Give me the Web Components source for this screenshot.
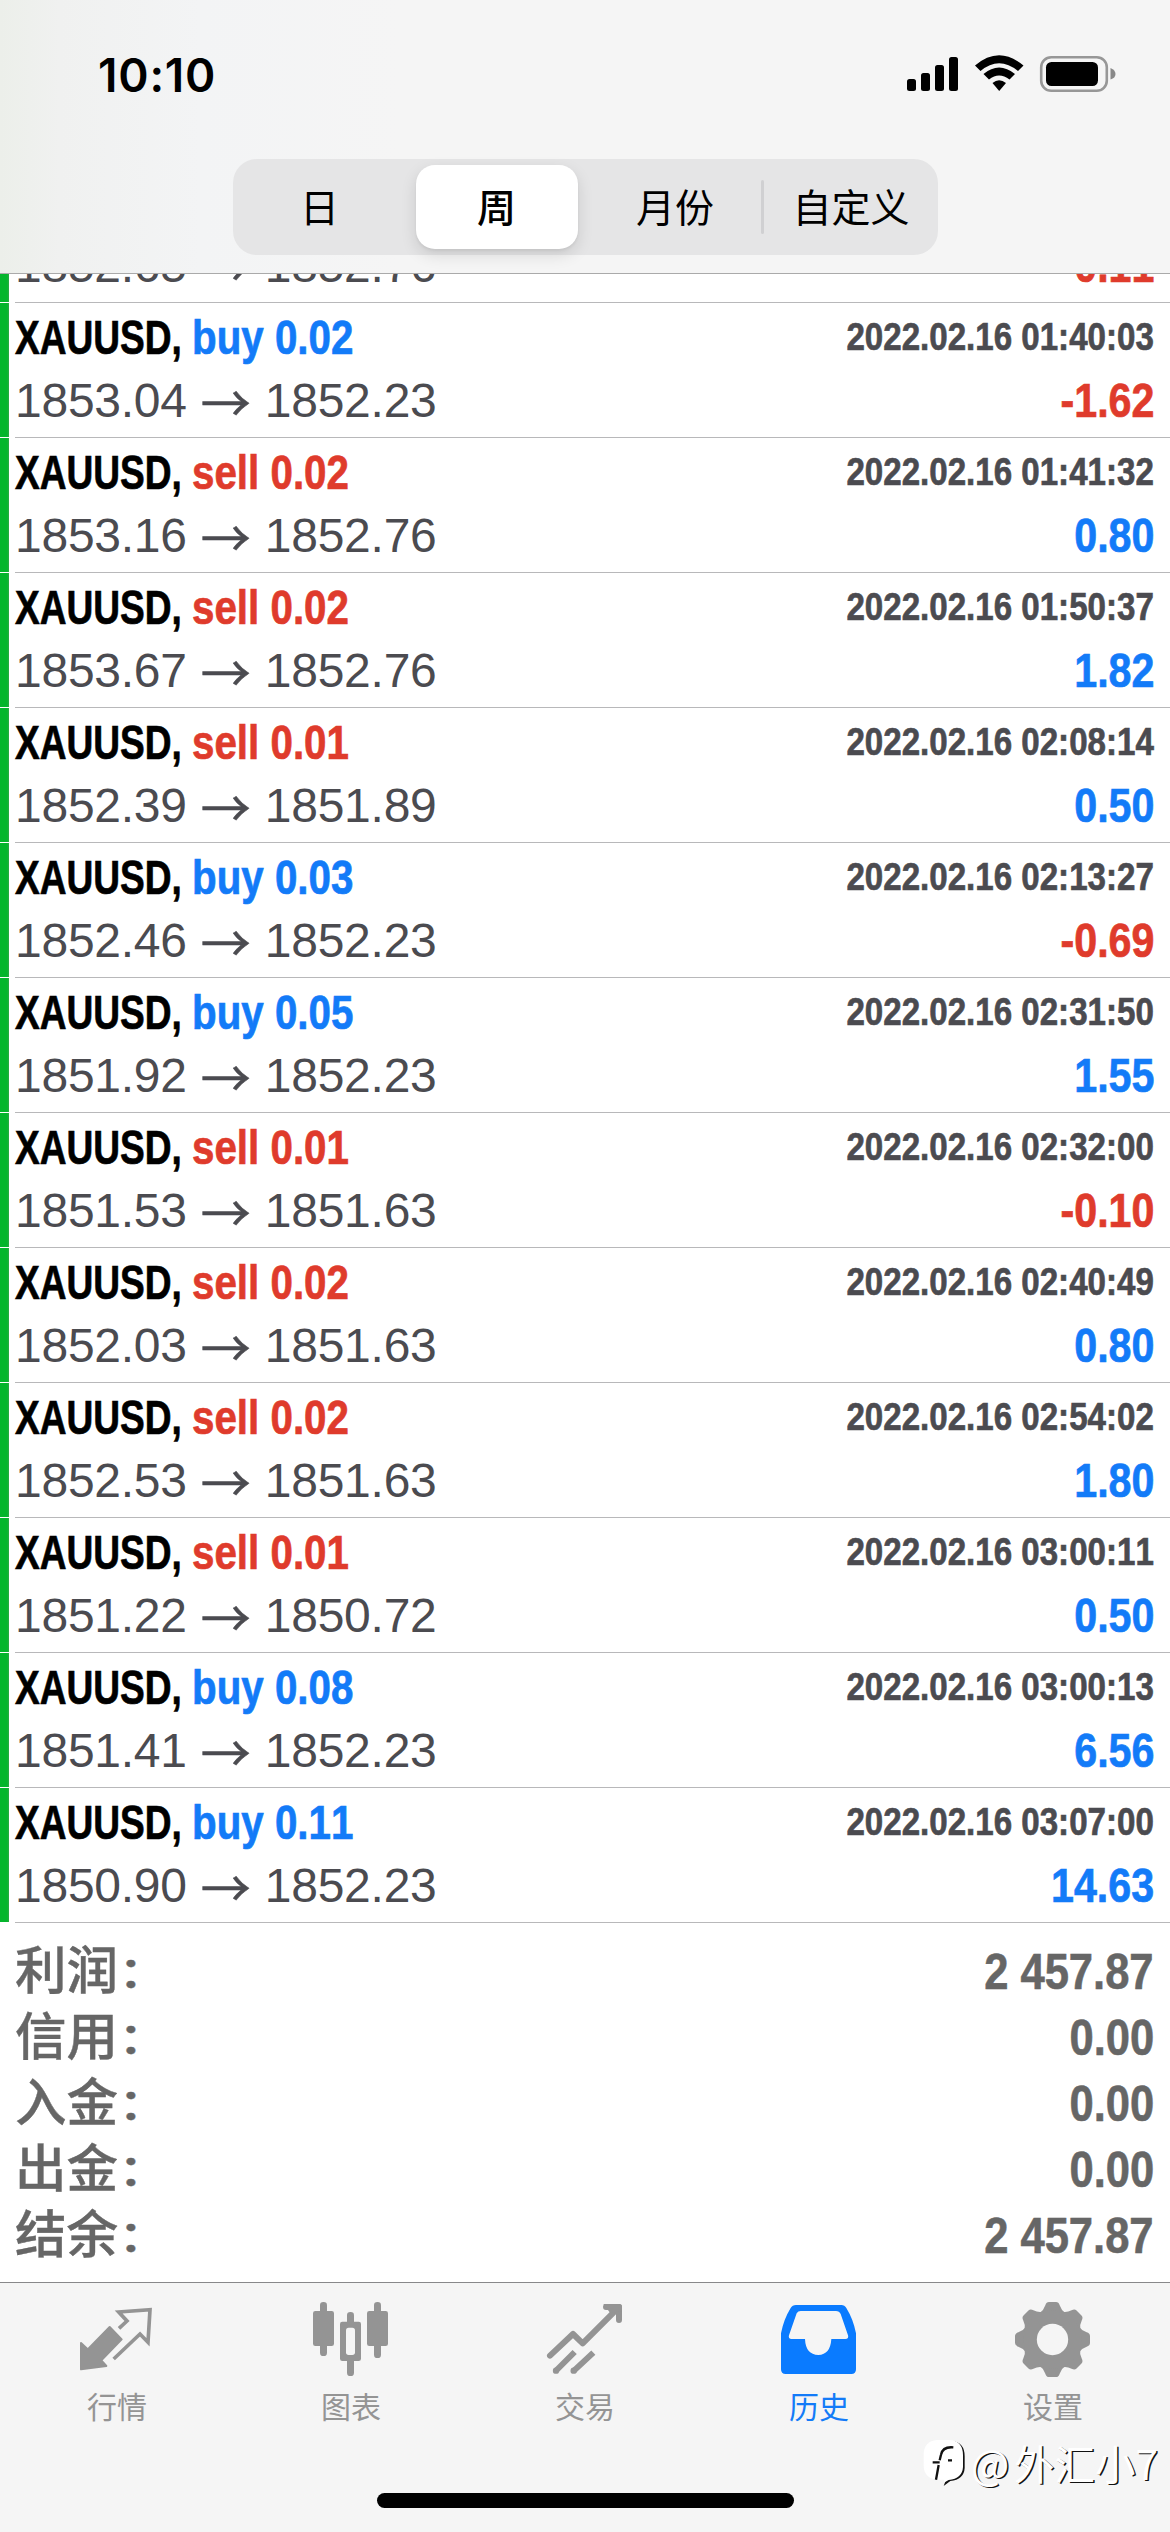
<!DOCTYPE html>
<html lang="zh-CN">
<head>
<meta charset="utf-8">
<title>历史</title>
<style>
html,body{margin:0;padding:0;background:#fff}
body{width:1170px;height:2532px;overflow:hidden;font-family:"Liberation Sans","Noto Sans CJK SC",sans-serif;font-kerning:none}
</style>
</head>
<body>
<history-app></history-app>
<script>
const define=(name,html,setup)=>customElements.define(name,class extends HTMLElement{
  constructor(){super();this.attachShadow({mode:'open'});}
  connectedCallback(){
    const t=document.createElement('template');
    t.innerHTML=typeof html==='function'?html(this):html;
    this.shadowRoot.replaceChildren(t.content.cloneNode(true));
    if(setup)setup(this);
  }
});

define('status-bar',`<style>
:host{display:flex;justify-content:space-between;height:159px;box-sizing:border-box;padding:48px 54px 0 98px}
.time{font:600 46px/54px Inter,sans-serif;letter-spacing:.8px;color:#000}
svg{display:block;width:212px;height:44px;margin-top:4px}
</style>
<span class="time">10:10</span>
<svg viewBox="904 52 212 44">
<rect x="907" y="79" width="9" height="12" rx="2.5"/><rect x="921" y="73" width="9" height="18" rx="2.5"/><rect x="935" y="65" width="9" height="26" rx="2.5"/><rect x="949" y="57" width="9" height="34" rx="2.5"/>
<path d="M975 65.5Q999 45 1023.5 65.5L1018 71Q999 55.500 980.500 71Z"/>
<path d="M983.500 74Q999 61 1015 74L1009.500 79.500Q999 71.500 989 79.500Z"/>
<path d="M992.500 83Q999 77.500 1006 83L999.200 91Z"/>
<rect x="1041.200" y="57.200" width="65.600" height="33.600" rx="10" fill="none" stroke="#979797" stroke-width="2.600"/>
<rect x="1046" y="62" width="52" height="24" rx="5.500"/>
<path d="M1110.500 68Q1115.500 70 1115.500 74T1110.500 79.500Z" fill="#888"/>
</svg>`);

define('seg-item',`<style>
:host{display:flex;align-items:center;justify-content:center;height:84px;box-sizing:border-box;padding-bottom:5px;border-radius:19px;font:400 39px/60px "Noto Sans CJK SC",sans-serif;color:#000}
:host([selected]){background:#fff;font-weight:500;box-shadow:0 6px 16px rgba(0,0,0,.12),0 2px 3px rgba(0,0,0,.05)}
</style><slot></slot>`);

define('seg-control',`<style>
:host{display:flex;align-items:center;width:705px;height:96px;box-sizing:border-box;padding:0 6px;background:#e5e5e6;border-radius:24px}
seg-item{flex:none}
seg-item:nth-of-type(1){width:162px;margin-right:15px}
seg-item:nth-of-type(2){width:162px;margin-right:12px}
seg-item:nth-of-type(3){width:171px}
seg-item:nth-of-type(4){width:159px;margin-left:8px}
i{width:3px;height:54px;background:#d0d0d2;border-radius:2px}
</style>
<seg-item>日</seg-item><seg-item selected>周</seg-item><seg-item>月份</seg-item><i></i><seg-item>自定义</seg-item>`);

define('top-bar',`<style>
:host{display:flex;flex-direction:column;align-items:center;height:274px;box-sizing:border-box;border-bottom:1px solid #aaa;background:linear-gradient(90deg,#ecefea 0,#f0f1f0 60px,#f3f4f5 200px,#f5f5f5 400px)}
status-bar{width:100%}
</style><status-bar></status-bar><seg-control></seg-control>`);

define('trade-row',el=>{
  const a=n=>el.getAttribute(n);
  const side=a('side'),p=a('profit');
  const heading=side?`<div class="sym"><span>XAUUSD,</span></div><span class="vol ${side}">${side} ${a('volume')}</span>`:'';
  return `<style>
:host{display:flex;height:135px;flex:none}
.bar{width:9px;height:134px;background:linear-gradient(90deg,#04b62c 7px,#2cab45);flex:none}
.body{flex:1;margin-left:6px;border-bottom:1px solid #b8b8ba;display:flex;justify-content:space-between;padding:3px 16px 5px 0}
.l,.r{display:flex;flex-direction:column}
.r{align-items:flex-end}
.name{display:flex;height:63px;font-weight:700;font-size:48px;line-height:63px;white-space:pre}
.name,.profit,.date{-webkit-text-stroke:.7px currentColor}
.sym{width:177px;color:#000}
span{white-space:pre}
.sym span,.vol{display:block;transform-origin:0 0}
.sym span{transform:scaleX(.772);width:0}
.vol{transform:scaleX(.84)}
.buy,.pos{color:#137bf8}.sell,.neg{color:#df3b2c}
.price{font-size:48px;line-height:63px;color:#4b4b50;display:flex;letter-spacing:-.25px}
.arrow{width:78px;text-align:center;font-family:"Noto Sans CJK SC",sans-serif;font-weight:400;font-size:50px;letter-spacing:0;-webkit-text-stroke:.5px currentColor}
.date{font-weight:700;font-size:39.500px;line-height:61px;color:#4b4b50;transform:scaleX(.838);transform-origin:100% 0;height:63px}
.profit{font-weight:700;font-size:48px;line-height:63px;transform:scaleX(.858);transform-origin:100% 0}
</style>
<div class="bar"></div>
<div class="body"><div class="l">
<div class="name">${heading}</div>
<div class="price"><span>${a('open')}</span><span class="arrow">→</span><span>${a('close')}</span></div>
</div><div class="r"><span class="date">${a('time')?'2022.02.16 '+a('time'):''}</span><span class="profit ${p[0]==='-'?'neg':'pos'}">${p}</span></div></div>`;
});

define('trade-list',`<style>
:host{display:flex;flex-direction:column;justify-content:flex-end;height:1649px;overflow:hidden}
</style>
<trade-row open="1852.65" close="1852.76" profit="-0.11"></trade-row>
<trade-row side="buy" volume="0.02" time="01:40:03" open="1853.04" close="1852.23" profit="-1.62"></trade-row>
<trade-row side="sell" volume="0.02" time="01:41:32" open="1853.16" close="1852.76" profit="0.80"></trade-row>
<trade-row side="sell" volume="0.02" time="01:50:37" open="1853.67" close="1852.76" profit="1.82"></trade-row>
<trade-row side="sell" volume="0.01" time="02:08:14" open="1852.39" close="1851.89" profit="0.50"></trade-row>
<trade-row side="buy" volume="0.03" time="02:13:27" open="1852.46" close="1852.23" profit="-0.69"></trade-row>
<trade-row side="buy" volume="0.05" time="02:31:50" open="1851.92" close="1852.23" profit="1.55"></trade-row>
<trade-row side="sell" volume="0.01" time="02:32:00" open="1851.53" close="1851.63" profit="-0.10"></trade-row>
<trade-row side="sell" volume="0.02" time="02:40:49" open="1852.03" close="1851.63" profit="0.80"></trade-row>
<trade-row side="sell" volume="0.02" time="02:54:02" open="1852.53" close="1851.63" profit="1.80"></trade-row>
<trade-row side="sell" volume="0.01" time="03:00:11" open="1851.22" close="1850.72" profit="0.50"></trade-row>
<trade-row side="buy" volume="0.08" time="03:00:13" open="1851.41" close="1852.23" profit="6.56"></trade-row>
<trade-row side="buy" volume="0.11" time="03:07:00" open="1850.90" close="1852.23" profit="14.63"></trade-row>`);

define('sum-row',el=>`<style>
:host{display:flex;justify-content:space-between;height:66px;padding:0 16px 0 15px;color:#666}
.k{display:flex;font:500 51.500px/56px "Noto Sans CJK SC",sans-serif;-webkit-text-stroke:.4px currentColor}
.c{display:block;transform:scaleY(.83);transform-origin:0 46px}
.v{font-weight:700;font-size:50.500px;line-height:66px;transform:scaleX(.862);transform-origin:100% 0;-webkit-text-stroke:.6px currentColor}
</style><span class="k">${el.getAttribute('label')}<span class="c">：</span></span><span class="v"><slot></slot></span>`);

define('account-summary',`<style>:host{display:block;height:359px;box-sizing:border-box;padding-top:16px}</style>
<sum-row label="利润">2 457.87</sum-row><sum-row label="信用">0.00</sum-row><sum-row label="入金">0.00</sum-row><sum-row label="出金">0.00</sum-row><sum-row label="结余">2 457.87</sum-row>`);

define('tab-item',`<style>
:host{display:flex;flex-direction:column;align-items:center;flex:1;color:#949494;font:400 30px/40px "Noto Sans CJK SC",sans-serif;padding-top:16px}
:host([active]){color:#137bf8}
::slotted(svg){display:block;width:80px;height:80px;margin-bottom:6px}
</style><slot name="icon"></slot><slot></slot>`);

define('tab-bar',`<style>
:host{display:flex;flex-direction:column;justify-content:space-between;align-items:center;height:250px;box-sizing:border-box;border-top:1px solid #88888a;background:#f5f5f5;padding-bottom:24px}
nav{display:flex;width:100%}
.home{width:417px;height:15px;border-radius:8px;background:#000}
</style>
<nav>
<tab-item><svg slot="icon" viewBox="111 87 240 240"><path fill="#949494" stroke="#949494" stroke-width="6" stroke-linejoin="round" d="M123 219L143 238L209 171L245 208L184 271L199 288L123 298Z"/><path fill="none" stroke="#949494" stroke-width="11" d="M237 175L261 153L236 126L330 119L324 217L300 192L221 267"/></svg>行情</tab-item>
<tab-item><svg slot="icon" viewBox="813 87 240 240"><g fill="#949494"><rect x="840" y="96" width="21" height="162" rx="10"/><rect x="819" y="123" width="63" height="105" rx="7"/><rect x="1002" y="96" width="21" height="168" rx="10"/><rect x="981" y="123" width="63" height="105" rx="7"/><rect x="921" y="126" width="21" height="192" rx="10"/><rect x="900" y="155" width="63" height="118" rx="7"/></g><rect x="918" y="173" width="27" height="82" rx="8" fill="#f5f5f5"/></svg>图表</tab-item>
<tab-item><svg slot="icon" viewBox="135 87 240 240"><g fill="none" stroke="#949494" stroke-width="18"><path stroke-linecap="round" stroke-linejoin="round" d="M150 257L219 192L248 220L353 115M318 111H357V150"/><path d="M224 246L170 300M280 248L222 302"/></g><path fill="#949494" d="M310 102H358Q366 102 366 110V124L330 128Z"/><g fill="#949494"><circle cx="168" cy="302" r="9.500"/><circle cx="221" cy="302" r="9.500"/></g></svg>交易</tab-item>
<tab-item active><svg slot="icon" viewBox="837 87 240 240"><path fill="#0a7bff" fill-rule="evenodd" d="M888 105H1024Q1034 105 1039 114Q1060 148 1068 190V298Q1068 312 1054 312H857Q843 312 843 298V190Q851 148 872 114Q877 105 888 105ZM902 123Q894 123 890 130L867 196Q864 207 875 207H915Q917 254 955 255Q991 254 994 207H1036Q1047 207 1044 196L1022 132Q1018 123 1008 123Z"/></svg>历史</tab-item>
<tab-item><svg slot="icon" class="gear" viewBox="429 87 240 240"></svg>设置</tab-item>
</nav>
<div class="home"></div>`,el=>{
  const svg=el.shadowRoot.querySelector('.gear');
  const teeth=[0,45,90,135,180,225,270,315].map(r=>`<path transform="rotate(${r} 547.500 208.500)" d="M510 128Q521 121 526 106Q529 96 537 96H558Q566 96 569 106Q574 121 585 128L547 208Z"/>`).join('');
  svg.innerHTML=`<g fill="#949494">${teeth}<circle cx="547.500" cy="208.500" r="87"/></g><circle cx="547.500" cy="208.500" r="47" fill="#f5f5f5"/>`;
});

define('author-mark',`<style>
:host{display:flex;align-items:center;color:#fff;font:400 40.500px/56px "Noto Sans CJK SC",sans-serif;text-shadow:1.500px 1px 0 #111}
svg{width:44px;height:48px;margin-right:4px}
.at{display:inline-block;width:43px}
</style>
<svg viewBox="163 528 132 144"><path fill="#111" d="M210 534H250Q288 538 288 580V615Q286 650 245 654L225 669L232 650Z"/><path fill="#fff" d="M205 531H245Q283 535 283 577V612Q281 647 240 651L228 658L225 650H205Q165 646 165 607V573Q166 535 205 531Z"/><path fill="none" stroke="#111" stroke-width="7" d="M254 553Q222 550 217 575L213 592M192 598H213M238 592H250M210 606L202 650"/></svg><span class="at">@</span><span>外汇小7</span>`);

define('history-app',`<style>
:host{display:block;position:relative;width:1170px;height:2532px;background:#fff}
author-mark{position:absolute;left:923px;top:2435px;white-space:nowrap}
</style>
<top-bar></top-bar><trade-list></trade-list><account-summary></account-summary><tab-bar></tab-bar><author-mark></author-mark>`);
</script>
</body>
</html>
